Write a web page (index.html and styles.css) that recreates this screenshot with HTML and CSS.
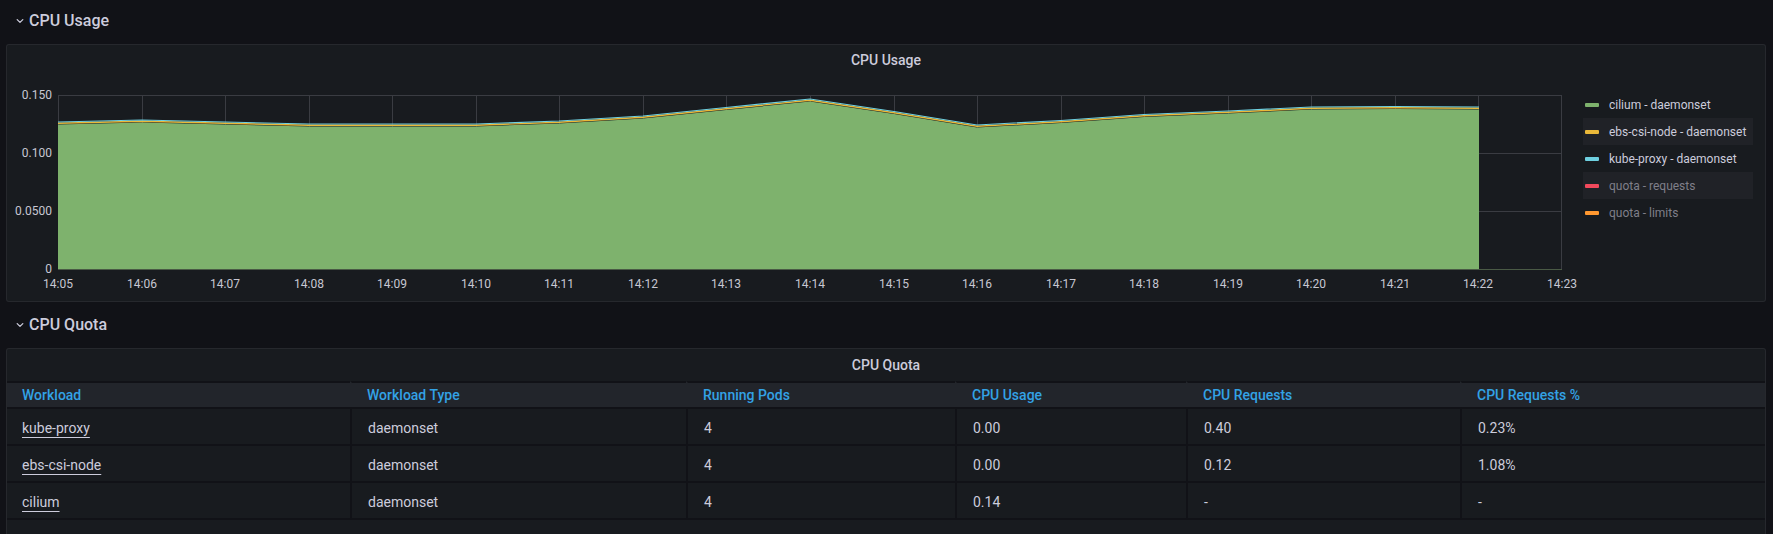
FILE: index.html
```html
<!DOCTYPE html>
<html lang="en">
<head>
<meta charset="utf-8">
<title>CPU</title>
<link rel="stylesheet" href="styles.css">
</head>
<body>
<div class="dash">
  <div class="row-title">
    <svg class="chev" width="8" height="8" viewBox="0 0 8 8"><path d="M1.2 2.6 L4 5.4 L6.8 2.6" fill="none" stroke="#ccccdc" stroke-width="1.3" stroke-linecap="round" stroke-linejoin="round"/></svg>
    <span>CPU Usage</span>
  </div>

  <section class="panel panel-graph">
    <div class="panel-title">CPU Usage</div>
    <div class="graph-body">
      <svg class="graph" width="1568" height="225" viewBox="0 0 1568 225">
        <g class="grid">
          <path d="M51 19.5H1555 M51 77.5H1555 M51 135.5H1555"/>
          <path d="M51.5 19V193 M135.5 19V193 M218.5 19V193 M302.5 19V193 M385.5 19V193 M469.5 19V193 M552.5 19V193 M636.5 19V193 M719.5 19V193 M803.5 19V193 M887.5 19V193 M970.5 19V193 M1054.5 19V193 M1137.5 19V193 M1221.5 19V193 M1304.5 19V193 M1388.5 19V193 M1471.5 19V193 M1554.5 19V193"/>
        </g>
        <polygon class="area" points="51,193 51,48.5 135,46.5 218,48.5 302,50.5 385,50.5 469,50.5 552,47.5 636,42.5 719,34 803,25.5 887,38 970,51.5 1054,47 1137,41 1221,37.5 1304,33.5 1388,33 1472,33.5 1472,193"/>
        <polyline class="l-yellow" points="51,47.3 135,45.3 218,47.3 302,49.3 385,49.3 469,49.3 552,46.3 636,41.3 719,32.8 803,24.3 887,36.8 970,50.3 1054,45.8 1137,39.8 1221,36.3 1304,32.3 1388,31.8 1472,32.3"/>
        <polyline class="l-cyan" points="51,46 135,44 218,46 302,48 385,48 469,48 552,45 636,40 719,31.5 803,23 887,35.5 970,49 1054,44.5 1137,38.5 1221,35 1304,31 1388,30.5 1472,31"/>
        <path class="axis" d="M51 193.5H1555"/>
        <g class="ylabels">
          <text x="45" y="19">0.150</text>
          <text x="45" y="77">0.100</text>
          <text x="45" y="135">0.0500</text>
          <text x="45" y="193">0</text>
        </g>
        <g class="xlabels">
          <text x="51" y="208">14:05</text>
          <text x="135" y="208">14:06</text>
          <text x="218" y="208">14:07</text>
          <text x="302" y="208">14:08</text>
          <text x="385" y="208">14:09</text>
          <text x="469" y="208">14:10</text>
          <text x="552" y="208">14:11</text>
          <text x="636" y="208">14:12</text>
          <text x="719" y="208">14:13</text>
          <text x="803" y="208">14:14</text>
          <text x="887" y="208">14:15</text>
          <text x="970" y="208">14:16</text>
          <text x="1054" y="208">14:17</text>
          <text x="1137" y="208">14:18</text>
          <text x="1221" y="208">14:19</text>
          <text x="1304" y="208">14:20</text>
          <text x="1388" y="208">14:21</text>
          <text x="1471" y="208">14:22</text>
          <text x="1555" y="208">14:23</text>
        </g>
      </svg>
      <ul class="legend">
        <li><i class="sw sw-green"></i><span>cilium - daemonset</span></li>
        <li><i class="sw sw-yellow"></i><span>ebs-csi-node - daemonset</span></li>
        <li><i class="sw sw-cyan"></i><span>kube-proxy - daemonset</span></li>
        <li class="off"><i class="sw sw-red"></i><span>quota - requests</span></li>
        <li class="off"><i class="sw sw-orange"></i><span>quota - limits</span></li>
      </ul>
    </div>
  </section>

  <div class="row-title row-title-2">
    <svg class="chev" width="8" height="8" viewBox="0 0 8 8"><path d="M1.2 2.6 L4 5.4 L6.8 2.6" fill="none" stroke="#ccccdc" stroke-width="1.3" stroke-linecap="round" stroke-linejoin="round"/></svg>
    <span>CPU Quota</span>
  </div>

  <section class="panel panel-table">
    <div class="panel-title panel-title-t">CPU Quota</div>
    <table class="quota">
      <colgroup>
        <col class="c1"><col class="c2"><col class="c3"><col class="c4"><col class="c5"><col class="c6">
      </colgroup>
      <thead>
        <tr>
          <th>Workload</th>
          <th>Workload Type</th>
          <th>Running Pods</th>
          <th>CPU Usage</th>
          <th>CPU Requests</th>
          <th>CPU Requests %</th>
        </tr>
      </thead>
      <tbody>
        <tr>
          <td><a class="wl" href="#">kube-proxy</a></td>
          <td>daemonset</td>
          <td>4</td>
          <td>0.00</td>
          <td>0.40</td>
          <td>0.23%</td>
        </tr>
        <tr>
          <td><a class="wl" href="#">ebs-csi-node</a></td>
          <td>daemonset</td>
          <td>4</td>
          <td>0.00</td>
          <td>0.12</td>
          <td>1.08%</td>
        </tr>
        <tr>
          <td><a class="wl" href="#">cilium</a></td>
          <td>daemonset</td>
          <td>4</td>
          <td>0.14</td>
          <td>-</td>
          <td>-</td>
        </tr>
      </tbody>
    </table>
  </section>
</div>
</body>
</html>
```

FILE: styles.css
```css
* { box-sizing: border-box; }

html, body {
  margin: 0;
  padding: 0;
  background: #111217;
  color: #ccccdc;
  font-family: Roboto, "Noto Sans", "Liberation Sans", sans-serif;
  overflow: hidden;
}

.dash {
  display: flex;
  flex-direction: column;
  padding: 0 7px 0 6px;
}

.row-title {
  height: 40px;
  display: flex;
  align-items: center;
  gap: 5px;
  padding-left: 10px;
  font-size: 16px;
  font-weight: 500;
  color: #ccccdc;
}

.row-title-2 {
  margin-top: 2px;
}

.chev {
  display: block;
  margin-top: 2px;
}

.panel {
  margin-top: 4px;
  background: #181b1f;
  border: 1px solid rgba(204, 204, 220, 0.08);
  border-radius: 3px;
}

.panel-graph {
  height: 258px;
  display: flex;
  flex-direction: column;
}

.panel-title {
  height: 31px;
  line-height: 31px;
  text-align: center;
  font-size: 14px;
  font-weight: 500;
  color: #ccccdc;
}

.panel-title-t {
  height: 32px;
  line-height: 33px;
}

.graph-body {
  display: flex;
  align-items: flex-start;
}

.graph {
  display: block;
  flex: none;
  overflow: visible;
}

.grid path {
  stroke: #3a3c42;
  stroke-width: 1;
  fill: none;
}

.area {
  fill: #7eb26d;
}

.l-yellow {
  fill: none;
  stroke: #eab839;
  stroke-width: 1.4;
}

.l-cyan {
  fill: none;
  stroke: #6ed0e0;
  stroke-width: 1.1;
}

.axis {
  stroke: #4a5a45;
  stroke-width: 1;
}

.ylabels text,
.xlabels text {
  fill: #c7c7d2;
  font-family: Roboto, "Noto Sans", sans-serif;
  font-size: 12px;
  dominant-baseline: central;
}

.ylabels text { text-anchor: end; }
.xlabels text { text-anchor: middle; }

.legend {
  list-style: none;
  margin: 15px 0 0 8px;
  padding: 0;
  width: 170px;
  flex: none;
}

.legend li {
  height: 27px;
  display: flex;
  align-items: center;
  gap: 10px;
  padding-left: 2px;
  font-size: 12px;
  color: #ccccdc;
}

.legend li:nth-child(even) {
  background: #202227;
}

.legend li.off {
  color: #7f7f89;
}

.sw {
  display: block;
  width: 14px;
  height: 4px;
  border-radius: 1px;
}

.sw-green { background: #7eb26d; }
.sw-yellow { background: #eab839; }
.sw-cyan { background: #6ed0e0; }
.sw-red { background: #f2495c; }
.sw-orange { background: #ff9830; }

.panel-table {
  padding-bottom: 30px;
}

.quota {
  width: 100%;
  table-layout: fixed;
  border-collapse: separate;
  border-spacing: 0;
  font-size: 14px;
}

.c1 { width: 343px; }
.c2 { width: 336px; }
.c3 { width: 269px; }
.c4 { width: 231px; }
.c5 { width: 274px; }
.c6 { width: 305px; }

.quota th {
  height: 26px;
  padding: 1px 16px 0 15px;
  line-height: 23px;
  text-align: left;
  font-weight: 500;
  color: #33a2e5;
  background: #22252b;
  border-top: 2px solid #111217;
  border-left: 2px solid transparent;
  white-space: nowrap;
}

.quota td {
  padding: 10px 16px 6px 16px;
  line-height: 19px;
  color: #ccccdc;
  border-top: 2px solid #111217;
  border-left: 2px solid #111217;
  white-space: nowrap;
}

.quota th:first-child,
.quota td:first-child {
  border-left: none;
  padding-left: 15px;
}

.quota tbody tr:last-child td {
  border-bottom: 2px solid #111217;
}

.wl {
  color: #ccccdc;
  text-decoration: underline;
  text-decoration-thickness: 1px;
  text-underline-offset: 4px;
}
```
